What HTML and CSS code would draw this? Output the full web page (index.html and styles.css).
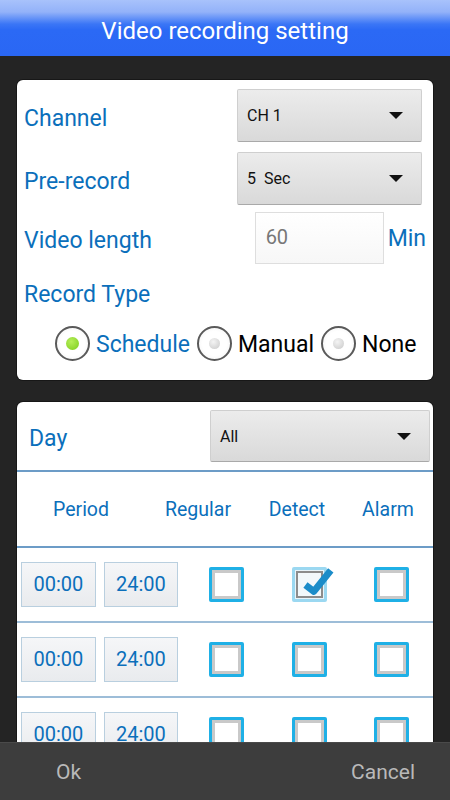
FILE: index.html
```html
<!DOCTYPE html>
<html>
<head>
<meta charset="utf-8">
<title>Video recording setting</title>
<link rel="stylesheet" href="styles.css">
</head>
<body>
  <div class="titlebar">Video recording setting</div>

  <div class="content">
    <div class="card general">
      <div class="row">
        <span class="label">Channel</span>
        <div class="spinner"><span>CH 1</span><i class="arrow"></i></div>
      </div>
      <div class="row">
        <span class="label">Pre-record</span>
        <div class="spinner"><span>5&nbsp; Sec</span><i class="arrow"></i></div>
      </div>
      <div class="row length-row">
        <span class="label">Video length</span>
        <div class="length">
          <div class="edit">60</div>
          <span class="label">Min</span>
        </div>
      </div>
      <div class="label type-label">Record Type</div>
      <div class="radios">
        <div class="radio-item on"><span class="radio"></span><span class="label">Schedule</span></div>
        <div class="radio-item"><span class="radio"></span><span>Manual</span></div>
        <div class="radio-item"><span class="radio"></span><span>None</span></div>
      </div>
    </div>

    <div class="card schedule">
      <div class="day-row">
        <span class="label">Day</span>
        <div class="spinner wide"><span>All</span><i class="arrow"></i></div>
      </div>
      <div class="head-row">
        <span>Period</span>
        <span>Regular</span>
        <span>Detect</span>
        <span>Alarm</span>
      </div>
      <div class="period-row">
        <div class="time">00:00</div>
        <div class="time">24:00</div>
        <div class="cell"><span class="check"></span></div>
        <div class="cell"><span class="check checked">
          <svg viewBox="0 0 36 36" width="38" height="38"><path d="M8 20 L16 26 L32 6" fill="none" stroke="#1b8cc9" stroke-width="6.5" stroke-linejoin="round"/></svg>
        </span></div>
        <div class="cell"><span class="check"></span></div>
      </div>
      <div class="period-row">
        <div class="time">00:00</div>
        <div class="time">24:00</div>
        <div class="cell"><span class="check"></span></div>
        <div class="cell"><span class="check"></span></div>
        <div class="cell"><span class="check"></span></div>
      </div>
      <div class="period-row last">
        <div class="time">00:00</div>
        <div class="time">24:00</div>
        <div class="cell"><span class="check"></span></div>
        <div class="cell"><span class="check"></span></div>
        <div class="cell"><span class="check"></span></div>
      </div>
    </div>
  </div>

  <div class="buttons">
    <span>Ok</span>
    <span>Cancel</span>
  </div>
</body>
</html>
```

FILE: styles.css
```css
* {
  margin: 0;
  padding: 0;
  box-sizing: border-box;
  font-family: Roboto, "Noto Sans", sans-serif;
}

body {
  width: 450px;
  height: 800px;
  display: flex;
  flex-direction: column;
  overflow: hidden;
  background: #242424;
}

.titlebar {
  height: 56px;
  flex-shrink: 0;
  background: linear-gradient(#a8c2fb 0, #93b2f9 12px, #3b76f6 24px, #2b69f5 30px, #2a67f4 100%);
  color: #fff;
  font-size: 24px;
  text-align: center;
  line-height: 62px;
}

.content {
  flex: 1;
  overflow: hidden;
  padding: 24px 17px 0 17px;
}

.card {
  background: #fff;
  border-radius: 6px;
  box-shadow: 0 0 0 1px rgba(0, 0, 0, 0.35);
}

.label {
  color: #0b6fbb;
  font-size: 23px;
}

/* first card */
.general {
  padding: 9px 11px 20px 7px;
}

.row {
  display: flex;
  justify-content: space-between;
  align-items: center;
  height: 53px;
}

.row > .label {
  padding-top: 5px;
}

.row + .row {
  margin-top: 10px;
}

.row.length-row {
  margin-top: 7px;
  height: 52px;
}

.spinner {
  width: 185px;
  height: 53px;
  display: flex;
  align-items: center;
  justify-content: space-between;
  padding: 0 18px 0 9px;
  background: linear-gradient(#ececec, #d9d9d9);
  border: 1px solid #cfcfcf;
  border-bottom-color: #a9a9a9;
  border-radius: 2px;
  font-size: 16px;
  color: #111;
}

.arrow {
  width: 0;
  height: 0;
  border-left: 7px solid transparent;
  border-right: 7px solid transparent;
  border-top: 7px solid #111;
}

.length {
  display: flex;
  align-items: center;
  gap: 4px;
  margin-right: -4px;
}

.edit {
  width: 129px;
  height: 52px;
  border: 1px solid #dedede;
  background: linear-gradient(#fff, #f7f7f7);
  color: #777;
  font-size: 20px;
  padding: 12px 10px;
}

.type-label {
  margin-top: 14px;
  line-height: 34px;
}

.radios {
  display: flex;
  align-items: center;
  gap: 7px;
  margin: 14px 0 0 31px;
  height: 34px;
}

.radio-item {
  display: flex;
  align-items: center;
  gap: 6px;
  font-size: 23px;
  color: #000;
}

.radio-item > span:last-child {
  padding-top: 3px;
}

.radio {
  width: 35px;
  height: 35px;
  border-radius: 50%;
  border: 2px solid #5a5a5a;
  background: radial-gradient(circle, #fff 55%, #eee 100%);
  display: flex;
  align-items: center;
  justify-content: center;
}

.radio::after {
  content: "";
  width: 11px;
  height: 11px;
  border-radius: 50%;
  background: radial-gradient(circle at 40% 35%, #f4f4f4, #c8c8c8);
}

.radio-item.on .radio::after {
  width: 13px;
  height: 13px;
  background: radial-gradient(circle at 40% 35%, #b6ef5a, #7ccc1c);
}

/* schedule card */
.schedule {
  margin-top: 22px;
  border-radius: 6px 6px 0 0;
}

.day-row {
  display: flex;
  justify-content: space-between;
  align-items: center;
  padding: 8px 3px 8px 12px;
  border-bottom: 2px solid #6c9cc7;
}

.day-row .label {
  padding-top: 5px;
}

.spinner.wide {
  width: 220px;
  height: 52px;
}

.head-row {
  display: grid;
  grid-template-columns: 128px 106px 92px 90px;
  align-items: center;
  height: 76px;
  border-bottom: 2px solid #6c9cc7;
  color: #0b6fbb;
  font-size: 19.5px;
  text-align: center;
}

.period-row {
  display: flex;
  align-items: center;
  height: 75px;
  padding-left: 4px;
  border-bottom: 2px solid #9dbdd8;
}

.time {
  width: 75px;
  height: 45px;
  margin-right: 8px;
  background: linear-gradient(#f5f6f8, #e9ebee);
  border: 1px solid #b9cfdf;
  color: #0b6fbb;
  font-size: 20px;
  text-align: center;
  line-height: 43px;
}

.period-row .time + .time {
  margin-right: 7px;
}

.cell {
  width: 83px;
  display: flex;
  justify-content: center;
}

.check {
  position: relative;
  width: 35px;
  height: 35px;
  border: 3px solid #1fb0e6;
  border-radius: 2px;
  box-shadow: inset 0 0 0 3px #c9c9c9;
  background: #fff;
}

.check.checked {
  border-color: #9bd8f1;
  box-shadow: inset 0 0 0 1px #e8f4fa, inset 0 0 0 3px #8c8c8c;
  background: #f2f8fb;
}

.check svg {
  position: absolute;
  left: 2px;
  top: -6px;
}

.buttons {
  height: 58px;
  flex-shrink: 0;
  display: flex;
  justify-content: space-between;
  align-items: center;
  padding: 0 35px 0 56px;
  background: #3d3d3d;
  border-top: 1px solid #4a4a4a;
  color: #b9b9b9;
  font-size: 21px;
}
```
